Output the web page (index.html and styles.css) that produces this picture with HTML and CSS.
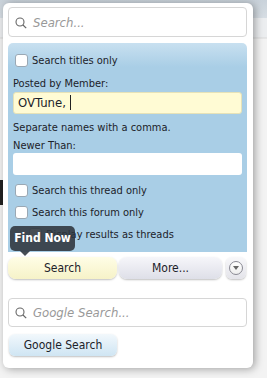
FILE: index.html
```html
<!doctype html>
<html lang="en">
	<head>
		<meta charset="utf-8">
		<title>Search</title>
		<link rel="stylesheet" href="styles.css">
	</head>
	<body>
		<div class="page">
			<div class="popup">
				<div class="field">
					<svg class="glass" width="12" height="12" viewBox="0 0 12 12"><circle cx="5" cy="5" r="4" fill="none" stroke="#666" stroke-width="1.1"/><path d="M8 8l3.2 3.2" stroke="#666" stroke-width="1.2"/></svg>
					<span class="placeholder">Search...</span>
				</div>
				<div class="options">
					<label class="check first"><span class="box"></span>Search titles only</label>
					<div class="label">Posted by Member:</div>
					<div class="input yellow">OVTune, <span class="caret"></span></div>
					<div class="hint">Separate names with a comma.</div>
					<div class="label tight">Newer Than:</div>
					<div class="input"></div>
					<label class="check"><span class="box"></span>Search this thread only</label>
					<label class="check"><span class="box"></span>Search this forum only</label>
					<label class="check sub"><span class="box"></span>Display results as threads</label>
				</div>
				<div class="buttons">
					<div class="tip">Find Now</div>
					<a href="#" class="btn primary">Search</a>
					<a href="#" class="btn more">More...</a>
					<a href="#" class="btn round"><span class="dot"></span></a>
				</div>
				<div class="field google">
					<svg class="glass" width="12" height="12" viewBox="0 0 12 12"><circle cx="5" cy="5" r="4" fill="none" stroke="#666" stroke-width="1.1"/><path d="M8 8l3.2 3.2" stroke="#666" stroke-width="1.2"/></svg>
					<span class="placeholder">Google Search...</span>
				</div>
				<a href="#" class="btn gbtn">Google Search</a>
			</div>
		</div>
	</body>
</html>
```

FILE: styles.css
```css
html, body {
	margin: 0;
	font-family: "DejaVu Sans Condensed", "DejaVu Sans", sans-serif;
	font-size: 11px;
	color: #1c2229;
}
.page {
	height: 378px;
	padding: 3px 0 0 3px;
	box-sizing: border-box;
	background:
		linear-gradient(90deg, #222 3px, transparent 3px) 0 180px / 3px 25px no-repeat,
		linear-gradient(#c9d2da, #d7dee4 18px, #eceef0 18px, #eceef0 37px, #d9d9d9 38px, #f3f3f3 39px);
}
.popup {
	width: 250px;
	height: 365px;
	box-sizing: border-box;
	padding: 4px 6px 0 5px;
	background: #fff;
	border-radius: 6px;
	box-shadow: 2px 1px 8px rgba(0, 0, 0, 0.35);
}
a {
	color: #1c2229;
	text-decoration: none;
}

.field {
	height: 30px;
	box-sizing: border-box;
	border: 1px solid #d6d6d6;
	border-radius: 4px;
	display: flex;
	align-items: center;
	gap: 6px;
	padding-left: 6px;
}
.glass {
	margin-top: 1px;
}
.placeholder {
	font-size: 13px;
	font-style: italic;
	color: #999;
}

.options {
	margin-top: 6px;
	height: 209px;
	box-sizing: border-box;
	padding: 8px 5px 0 5px;
	border-radius: 5px 5px 0 0;
	background: linear-gradient(#c8e0f0, #a9cee6 24px, #a9cee6);
}
.check {
	display: flex;
	align-items: center;
	height: 18px;
	margin: 0 0 4px 2px;
}
.check.first {
	margin-bottom: 7px;
}
.box {
	width: 11px;
	height: 11px;
	margin-right: 4px;
	background: #fff;
	border: 1px solid #9aa8b4;
	border-radius: 3px;
}
.check.sub {
	margin: 0 0 0 16px;
	height: 19px;
}
.label {
	height: 15px;
	line-height: 15px;
	margin-bottom: 1px;
}
.label.tight {
	margin-bottom: 0;
}
.hint {
	height: 15px;
	line-height: 15px;
	margin-bottom: 3px;
}
.input {
	height: 22px;
	box-sizing: border-box;
	background: #fff;
	border-radius: 3px;
	margin-bottom: 6px;
	font-size: 13px;
	line-height: 22px;
	padding-left: 4px;
}
.input.yellow {
	background: #fffbd4;
	border: 1px solid #e6e2b8;
	line-height: 20px;
}
.caret {
	display: inline-block;
	width: 1px;
	height: 15px;
	background: #222;
	vertical-align: -3px;
}

.buttons {
	position: relative;
	display: flex;
	align-items: flex-start;
	gap: 2px;
	margin-top: 5px;
}
.btn {
	display: block;
	height: 22px;
	line-height: 22px;
	text-align: center;
	font-size: 12px;
	border-radius: 8px;
	box-shadow: 0 1px 2px rgba(0, 0, 0, 0.25);
}
.primary {
	width: 109px;
	background: linear-gradient(#fffde6, #f6f2c8);
}
.more {
	width: 103px;
	background: linear-gradient(#f6f6fa, #dedfe8);
}
.round {
	width: 20px;
	margin-left: 2px;
	border-radius: 6px;
	background: linear-gradient(#f8f8fa, #e4e4ea);
	display: flex;
	align-items: center;
	justify-content: center;
}
.dot {
	width: 14px;
	height: 14px;
	box-sizing: border-box;
	border: 1px solid #8a8a94;
	border-radius: 50%;
	background: linear-gradient(#fff, #eee);
	position: relative;
}
.dot::after {
	content: "";
	position: absolute;
	left: 2.5px;
	top: 4px;
	border-left: 3.5px solid transparent;
	border-right: 3.5px solid transparent;
	border-top: 4px solid #666;
}
.tip {
	position: absolute;
	left: 2px;
	top: -31px;
	width: 65px;
	height: 25px;
	line-height: 25px;
	text-align: center;
	font-size: 12px;
	font-weight: bold;
	color: #fff;
	background: rgba(45, 52, 60, 0.88);
	border-radius: 5px;
}
.tip::after {
	content: "";
	position: absolute;
	left: 10px;
	bottom: -5px;
	border-left: 5px solid transparent;
	border-right: 5px solid transparent;
	border-top: 5px solid rgba(45, 52, 60, 0.88);
}

.google {
	margin-top: 19px;
	height: 29px;
}
.gbtn {
	width: 108px;
	margin: 7px 0 0 1px;
	border-radius: 6px;
	background: linear-gradient(#f2f8fc, #cfe5f3);
}
```
